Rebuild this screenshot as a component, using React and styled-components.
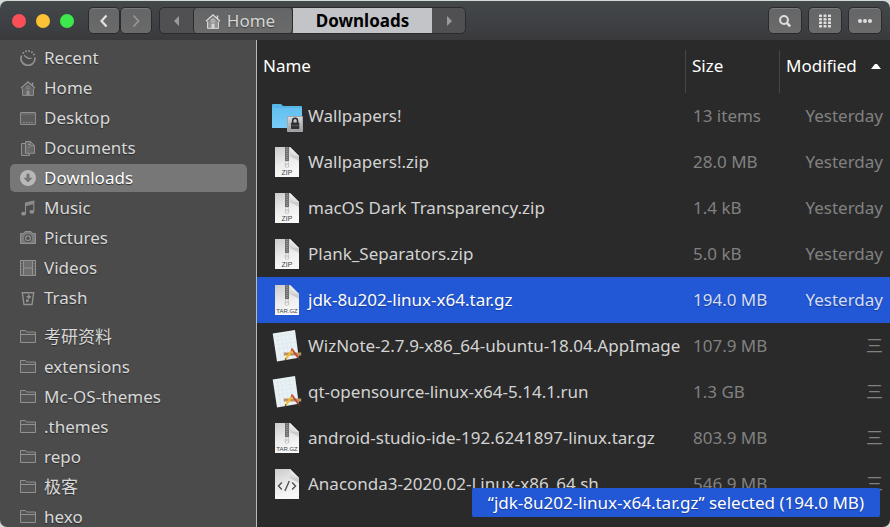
import React, { useState } from 'react';
import styled, { createGlobalStyle, css } from 'styled-components';

const GlobalStyle = createGlobalStyle`
  * { box-sizing: border-box; }
  body {
    margin: 0;
    background: #d3dbd6;
    font-family: "Noto Sans", "Noto Sans CJK SC", sans-serif;
    font-size: 17px;
    line-height: 24px;
    color: #d6d6d6;
  }
  button { font: inherit; color: inherit; }
`;

const Window = styled.div`
  height: 100vh;
  padding-top: 1px;
  display: flex;
  flex-direction: column;
`;

const HeaderBar = styled.header`
  flex: none;
  height: 39px;
  padding: 0 8px 0 12px;
  display: flex;
  align-items: center;
  border-radius: 7px 7px 0 0;
  background: linear-gradient(#43484b, #3a3a3d);
`;

const WindowControls = styled.div`
  display: flex;
  gap: 10px;
  margin-right: 14px;
`;

const ControlDot = styled.button`
  width: 14px;
  height: 14px;
  padding: 0;
  border: 0;
  border-radius: 50%;
  background: ${(p) => p.$color};
`;

const ButtonGroup = styled.div`
  display: flex;
  gap: ${(p) => p.$gap || 0}px;
  margin-left: ${(p) => (p.$end ? 'auto' : 0)};
  margin-right: ${(p) => p.$after || 0}px;
`;

const ToolButton = styled.button`
  width: ${(p) => p.$width}px;
  height: 27px;
  padding: 0;
  display: grid;
  place-items: center;
  border: 1px solid #2a2b2d;
  border-radius: 5px;
  background: linear-gradient(#656667, #6a6a6b);
  box-shadow: inset 0 1px 0 #7b7c7d;
`;

const PathBar = styled.nav`
  display: flex;
  height: 27px;
  border: 1px solid #2a2b2d;
  border-radius: 5px;
  overflow: hidden;
  background: #505052;
`;

const PathArrow = styled.button`
  width: 33px;
  padding: 0;
  border: 0;
  background: none;
  display: grid;
  place-items: center;
`;

const Crumb = styled.button`
  display: flex;
  align-items: center;
  justify-content: center;
  gap: 6px;
  width: ${(p) => p.$width}px;
  padding: 0;
  border: 0;
  white-space: nowrap;
  ${(p) =>
    p.$current
      ? css`
          background: #c3c4c8;
          color: #000;
          font-weight: 700;
        `
      : css`
          padding-right: 6px;
          background: linear-gradient(#646566, #6a6a6b);
          border-left: 1px solid #2a2b2d;
          border-right: 1px solid #2a2b2d;
          border-radius: 4px;
          text-shadow: 0 1px 1px #3b3b3b;
        `}
`;

const Body = styled.div`
  flex: 1;
  min-height: 0;
  display: flex;
  border-radius: 0 0 7px 7px;
  overflow: hidden;
`;

const Sidebar = styled.nav`
  flex: none;
  width: 257px;
  padding: 3px 9px 0 10px;
  overflow: hidden;
  border-right: 1px solid #b9bab5;
  background: #4b4b4b;
`;

const PlaceList = styled.ul`
  margin: 0 0 11px;
  padding: 0;
  list-style: none;
`;

const Place = styled.a`
  display: flex;
  align-items: center;
  gap: 8px;
  height: 28px;
  margin: 1px 0 2px;
  padding-left: 10px;
  border-radius: 5px;
  text-decoration: none;
  white-space: nowrap;
  color: ${(p) => (p.$current ? '#fff' : '#d8d8d8')};
  background: ${(p) => (p.$current ? '#777' : 'none')};
  text-shadow: 0 1px 1px #2c2c2c;
  svg { color: ${(p) => (p.$current ? '#b8b8b8' : '#919191')}; }
`;

const Content = styled.main`
  position: relative;
  flex: 1;
  min-width: 0;
  overflow: hidden;
  background: #2a2a2a;
`;

const FileTable = styled.table`
  width: 100%;
  table-layout: fixed;
  border-collapse: collapse;
`;

const HeadCell = styled.th`
  height: 53px;
  padding: 0;
  font-weight: 400;
  vertical-align: bottom;
  width: ${(p) => (p.$width ? `${p.$width}px` : 'auto')};
`;

const SortButton = styled.button`
  width: 100%;
  height: 43px;
  padding: 0 9px 11px 6px;
  display: flex;
  align-items: center;
  justify-content: space-between;
  border: 0;
  border-left: ${(p) => (p.$divided ? '1px solid #46464a' : '0')};
  background: none;
  color: #fff;
`;

const FileRow = styled.tr`
  height: 46px;
  color: ${(p) => (p.$selected ? '#fff' : '#d3d3d3')};
  background: ${(p) => (p.$selected ? '#2257d6' : 'none')};
  text-shadow: ${(p) => (p.$selected ? '0 1px 1px #173c94' : 'none')};
  --muted: ${(p) => (p.$selected ? '#d3ddf7' : '#818181')};
`;

const NameCell = styled.td`
  padding: 0 0 0 14px;
`;

const FileName = styled.div`
  display: flex;
  align-items: center;
  gap: 5px;
  white-space: nowrap;
`;

const InfoCell = styled.td`
  padding: 0 7px 0 8px;
  white-space: nowrap;
  text-align: ${(p) => (p.$right ? 'right' : 'left')};
  color: var(--muted);
`;

const StatusBubble = styled.div`
  position: absolute;
  right: 10px;
  bottom: 10px;
  height: 29px;
  padding: 0 16px;
  line-height: 29px;
  border-radius: 2px;
  background: #2257d6;
  color: #fff;
  white-space: nowrap;
  text-shadow: 0 1px 1px #173c94;
`;

const Glyph = styled.svg.attrs({ 'aria-hidden': true })`
  flex: none;
  display: block;
`;

const house = (
  <>
    <path d="M1 8.2 8 2l7 6.2M12.5 5.5V2.5" fill="none" stroke="currentColor" strokeWidth="1.5" />
    <path d="M2.5 9v6.3h11V9L8 4.2z" fill="currentColor" opacity=".4" />
    <path d="M2.5 8.5v6.9h11V8.5" fill="none" stroke="currentColor" />
    <circle cx="8" cy="7.6" r="1.6" fill="none" stroke="currentColor" strokeWidth=".8" />
    <path d="M6.5 15.3v-4.5h3v4.5z" fill="currentColor" />
  </>
);

const placeGlyphs = {
  recent: (
    <>
      <path d="M1.6 5.5A7 7 0 1 0 14.9 7.4" fill="none" stroke="currentColor" strokeWidth="1.7" />
      <path d="M4 5.2 8 8.4h3.6" fill="none" stroke="currentColor" strokeWidth="1.4" />
      <g fill="currentColor">
        <circle cx="3.3" cy="3" r="1" />
        <circle cx="6" cy="1.3" r="1" />
        <circle cx="9" cy="1.1" r="1" />
        <circle cx="11.9" cy="2.3" r="1" />
        <circle cx="14" cy="4.6" r="1" />
      </g>
    </>
  ),
  home: house,
  desktop: (
    <>
      <rect x=".5" y="2.5" width="15" height="12" rx=".5" fill="currentColor" fillOpacity=".25" stroke="currentColor" />
      <path d="M1 4h14" stroke="currentColor" opacity=".5" />
      <path d="M3 12.5h10" stroke="currentColor" strokeDasharray="1.5 1.2" />
    </>
  ),
  documents: (
    <>
      <path d="M5.5 3.5h-4v12h8v-2" fill="currentColor" fillOpacity=".2" stroke="currentColor" />
      <path d="M5.5 1.5h5l4 4v7.8h-9z" fill="currentColor" fillOpacity=".4" stroke="currentColor" />
      <path d="M10 1.5v4.3h4.5M8 4.5h2M8 7.5h1.5" fill="none" stroke="currentColor" />
    </>
  ),
  downloads: (
    <>
      <circle cx="8" cy="8" r="8" fill="currentColor" />
      <path d="M6.5 3.7h3v4h3L8 12.5 3.5 7.7h3z" fill="#747474" />
    </>
  ),
  music: (
    <>
      <path d="M5.5 13V3.3l8.3-2v9.8" fill="none" stroke="currentColor" strokeWidth="1.1" />
      <path d="M5.5 2.8 14 .8v3.4l-8.5 2z" fill="currentColor" opacity=".85" />
      <ellipse cx="3.6" cy="13.7" rx="2.4" ry="1.9" fill="currentColor" />
      <ellipse cx="11.8" cy="11.8" rx="2.4" ry="1.9" fill="currentColor" />
    </>
  ),
  pictures: (
    <>
      <path d="M.5 3.5h3L5 1.5h6l1.5 2h3v10H.5z" fill="currentColor" fillOpacity=".7" stroke="currentColor" />
      <circle cx="8" cy="8.2" r="3.9" fill="#4b4b4b" />
      <circle cx="8" cy="8.2" r="2.4" fill="none" stroke="currentColor" strokeWidth="1.3" />
    </>
  ),
  videos: (
    <>
      <rect x=".5" y=".5" width="15" height="15" fill="currentColor" fillOpacity=".5" stroke="currentColor" />
      <path d="M3.5 1v14M12.5 1v14M3.5 8h9" stroke="currentColor" />
      <path d="M2 1.5v14M14 1.5v14" stroke="#4b4b4b" strokeWidth="1.3" strokeDasharray="1.4 1.4" />
    </>
  ),
  trash: (
    <>
      <path d="M2.3 2.7h11.4L12 14.5H4z" fill="none" stroke="currentColor" strokeWidth="1.4" />
      <path d="M8 4.5h1.5V6H11v1.8H9.3V9H8V7.5H6.5V6H8z" fill="currentColor" />
      <rect x="6" y="9.3" width="2.6" height="2.8" fill="currentColor" />
    </>
  ),
  folder: (
    <>
      <path d="M.5 13.5v-12h5l1.2 1.500h8.800v10.500z" fill="currentColor" fillOpacity=".15" stroke="currentColor" />
      <path d="M1 5.5h14" stroke="currentColor" />
    </>
  ),
};

function PlaceIcon({ kind }) {
  return <Glyph width="16" height="16" viewBox="0 0 16 16">{placeGlyphs[kind]}</Glyph>;
}

function Sheet({ children }) {
  return (
    <>
      <defs>
        <linearGradient id="sheet" x1="0" x2=".3" y2="1">
          <stop offset="0" stopColor="#cbcbcb" />
          <stop offset=".6" stopColor="#ececec" />
          <stop offset="1" stopColor="#f8f8f8" />
        </linearGradient>
        <linearGradient id="fold" x1=".7" y1=".2" x2=".2" y2="1">
          <stop offset="0" stopColor="#fff" />
          <stop offset="1" stopColor="#d0d0d0" />
        </linearGradient>
      </defs>
      <path d="M4 1h15l9 9v21H4z" fill="url(#sheet)" />
      <path d="M18 9.500 28 10v5z" fill="#999" opacity=".35" />
      <path d="M19 1l9 9h-7.500L19 8.500z" fill="url(#fold)" />
      {children}
    </>
  );
}

const SheetLabel = styled.text`
  font: 400 ${(p) => p.$size}px "Liberation Sans", sans-serif;
  fill: #444;
  text-anchor: middle;
  text-shadow: none;
`;

function Archive({ label, size }) {
  return (
    <Sheet>
      <path d="M14 1h4v14h-4z" fill="#6f6f6f" />
      <path d="M16 1v14" stroke="#a0a0a0" strokeWidth="1.4" strokeDasharray="1 1" />
      <path d="M14.500 15h3l.8 4.500a2.300 2.300 0 0 1-4.600 0z" fill="#c4c4c4" />
      <circle cx="16" cy="16.500" r="1" fill="#f6f6f6" />
      <circle cx="16" cy="19.800" r="1.200" fill="#efefef" />
      <SheetLabel x="16" y="29" $size={size}>{label}</SheetLabel>
    </Sheet>
  );
}

const fileGlyphs = {
  folder: (
    <>
      <defs>
        <linearGradient id="blue" x2="0" y2="1">
          <stop offset="0" stopColor="#62c0f0" />
          <stop offset="1" stopColor="#78cdf8" />
        </linearGradient>
        <linearGradient id="badge" x2="0" y2="1">
          <stop offset="0" stopColor="#d8dde0" />
          <stop offset="1" stopColor="#9a9a9c" />
        </linearGradient>
      </defs>
      <path d="M1 5a1 1 0 0 1 1-1h8l2 2h18a1 1 0 0 1 1 1v20a1 1 0 0 1-1 1H2a1 1 0 0 1-1-1z" fill="#58b5e8" />
      <path d="M1 8h30v19a1 1 0 0 1-1 1H2a1 1 0 0 1-1-1z" fill="url(#blue)" />
      <path d="M16.5 16.5h15v15h-15z" fill="url(#badge)" stroke="#a3a7aa" />
      <path d="M21.700 23v-2.400a2.400 2.400 0 0 1 4.800 0V23" fill="none" stroke="#2b2b2b" strokeWidth="1.6" />
      <rect x="20" y="22.5" width="8.300" height="6.500" rx=".8" fill="#333" />
      <path d="M20.500 25.500h7.300" stroke="#555" />
    </>
  ),
  zip: <Archive label="ZIP" size={7} />,
  targz: <Archive label="TAR.GZ" size={6} />,
  script: (
    <Sheet>
      <path d="M10.800 14.500 7.500 18l3.300 3.500M21.200 14.500l3.300 3.500-3.300 3.500M18.300 13l-4.400 10" fill="none" stroke="#505050" strokeWidth="1.4" />
    </Sheet>
  ),
  app: (
    <>
      <path d="M1.700 3.500 24 0l3.800 27.800L6 31.500z" fill="#eaf1f4" />
      <path d="M3.200 7 24.400 3.700M3.800 11 25 7.700M4.300 15l21.200-3.300M4.900 19l21.200-3.300M6 4l4 26M10 3.300l4 26.200M14 2.700l4 26.200M18 2l4 26" fill="none" stroke="#d9e5eb" strokeWidth=".6" />
      <path d="M12.700 22.500h17.500v3H12.700z" fill="#bd9262" />
      <path d="M26.500 27l2.700 3.500" stroke="#4a3530" strokeWidth="1.6" />
      <path d="m20.500 18.500 6.500 9" stroke="#c8402c" strokeWidth="1.8" />
      <path d="M20.800 20.500 14.800 29" stroke="#f4bd23" strokeWidth="2" />
      <path d="m14.300 28-1 3.300 2.400-2.200z" fill="#6b4b2b" />
      <path d="m21.600 19-1.200 2" stroke="#b9696b" strokeWidth="2" />
    </>
  ),
};

function FileIcon({ kind }) {
  return <Glyph width="32" height="32" viewBox="0 0 32 32">{fileGlyphs[kind]}</Glyph>;
}

const places = [
  ['recent', 'Recent'],
  ['home', 'Home'],
  ['desktop', 'Desktop'],
  ['documents', 'Documents'],
  ['downloads', 'Downloads'],
  ['music', 'Music'],
  ['pictures', 'Pictures'],
  ['videos', 'Videos'],
  ['trash', 'Trash'],
];

const bookmarks = ['考研资料', 'extensions', 'Mc-OS-themes', '.themes', 'repo', '极客', 'hexo'].map(
  (name) => ['folder', name],
);

const files = [
  { kind: 'folder', name: 'Wallpapers!', size: '13 items', modified: 'Yesterday' },
  { kind: 'zip', name: 'Wallpapers!.zip', size: '28.0 MB', modified: 'Yesterday' },
  { kind: 'zip', name: 'macOS Dark Transparency.zip', size: '1.4 kB', modified: 'Yesterday' },
  { kind: 'zip', name: 'Plank_Separators.zip', size: '5.0 kB', modified: 'Yesterday' },
  { kind: 'targz', name: 'jdk-8u202-linux-x64.tar.gz', size: '194.0 MB', modified: 'Yesterday' },
  { kind: 'app', name: 'WizNote-2.7.9-x86_64-ubuntu-18.04.AppImage', size: '107.9 MB', modified: '三' },
  { kind: 'app', name: 'qt-opensource-linux-x64-5.14.1.run', size: '1.3 GB', modified: '三' },
  { kind: 'targz', name: 'android-studio-ide-192.6241897-linux.tar.gz', size: '803.9 MB', modified: '三' },
  { kind: 'script', name: 'Anaconda3-2020.02-Linux-x86_64.sh', size: '546.9 MB', modified: '三' },
];

function Places({ items }) {
  return (
    <PlaceList>
      {items.map(([kind, name]) => (
        <li key={name}>
          <Place href={`#${name}`} $current={name === 'Downloads'}>
            <PlaceIcon kind={kind} />
            {name}
          </Place>
        </li>
      ))}
    </PlaceList>
  );
}

export default function App() {
  const [selected, setSelected] = useState(4);
  const file = files[selected];

  return (
    <>
      <GlobalStyle />
      <Window>
        <HeaderBar>
          <WindowControls>
            <ControlDot $color="#fb4f57" aria-label="Close" />
            <ControlDot $color="#fdc135" aria-label="Minimize" />
            <ControlDot $color="#3ce84b" aria-label="Maximize" />
          </WindowControls>
          <ButtonGroup $after={7}>
            <ToolButton $width={32} aria-label="Back">
              <Glyph width="16" height="16" viewBox="0 0 16 16">
                <path d="M10.5 2.5 5.5 8l5 5.5" fill="none" stroke="#e2e2e2" strokeWidth="2.2" />
              </Glyph>
            </ToolButton>
            <ToolButton $width={32} aria-label="Forward">
              <Glyph width="16" height="16" viewBox="0 0 16 16">
                <path d="m5.500 2.500 5 5.500-5 5.500" fill="none" stroke="#999" strokeWidth="1.6" />
              </Glyph>
            </ToolButton>
          </ButtonGroup>
          <PathBar aria-label="Path">
            <PathArrow aria-label="Scroll path left">
              <Glyph width="8" height="10" viewBox="0 0 8 10">
                <path d="M6 0v10L1 5z" fill="#9a9a9a" />
              </Glyph>
            </PathArrow>
            <Crumb $width={100}>
              <Glyph width="16" height="16" viewBox="0 0 16 16">{house}</Glyph>
              Home
            </Crumb>
            <Crumb $width={139} $current>Downloads</Crumb>
            <PathArrow aria-label="Scroll path right">
              <Glyph width="8" height="10" viewBox="0 0 8 10">
                <path d="M2 0v10l5-5z" fill="#9a9a9a" />
              </Glyph>
            </PathArrow>
          </PathBar>
          <ButtonGroup $gap={6} $end>
            <ToolButton $width={34} aria-label="Search">
              <Glyph width="16" height="16" viewBox="0 0 16 16">
                <circle cx="7" cy="7" r="3.9" fill="none" stroke="#dedede" strokeWidth="2" />
                <path d="m9.800 9.800 3.400 3.600" stroke="#dedede" strokeWidth="2.6" />
              </Glyph>
            </ToolButton>
            <ToolButton $width={34} aria-label="Icon view">
              <Glyph width="16" height="16" viewBox="0 0 16 16" fill="#dedede">
                {[2, 6.5, 11].map((x) =>
                  [1.5, 5, 8.5, 12].map((y) => (
                    <rect key={`${x} ${y}`} x={x} y={y} width="3" height="2.5" rx=".6" />
                  )),
                )}
              </Glyph>
            </ToolButton>
            <ToolButton $width={34} aria-label="Menu">
              <Glyph width="16" height="16" viewBox="0 0 16 16" fill="#dedede">
                <circle cx="3" cy="8" r="2" />
                <circle cx="8" cy="8" r="2" />
                <circle cx="13" cy="8" r="2" />
              </Glyph>
            </ToolButton>
          </ButtonGroup>
        </HeaderBar>
        <Body>
          <Sidebar aria-label="Places">
            <Places items={places} />
            <Places items={bookmarks} />
          </Sidebar>
          <Content>
            <FileTable>
              <thead>
                <tr>
                  <HeadCell>
                    <SortButton>Name</SortButton>
                  </HeadCell>
                  <HeadCell $width={94}>
                    <SortButton $divided>Size</SortButton>
                  </HeadCell>
                  <HeadCell $width={111} aria-sort="descending">
                    <SortButton $divided>
                      Modified
                      <Glyph width="10" height="6" viewBox="0 0 10 6">
                        <path d="M0 6h10L6 1H4z" fill="#fff" />
                      </Glyph>
                    </SortButton>
                  </HeadCell>
                </tr>
              </thead>
              <tbody>
                {files.map((f, i) => (
                  <FileRow key={f.name} $selected={i === selected} onClick={() => setSelected(i)}>
                    <NameCell>
                      <FileName>
                        <FileIcon kind={f.kind} />
                        {f.name}
                      </FileName>
                    </NameCell>
                    <InfoCell>{f.size}</InfoCell>
                    <InfoCell $right>{f.modified}</InfoCell>
                  </FileRow>
                ))}
              </tbody>
            </FileTable>
            <StatusBubble role="status">
              “{file.name}” selected ({file.size})
            </StatusBubble>
          </Content>
        </Body>
      </Window>
    </>
  );
}
